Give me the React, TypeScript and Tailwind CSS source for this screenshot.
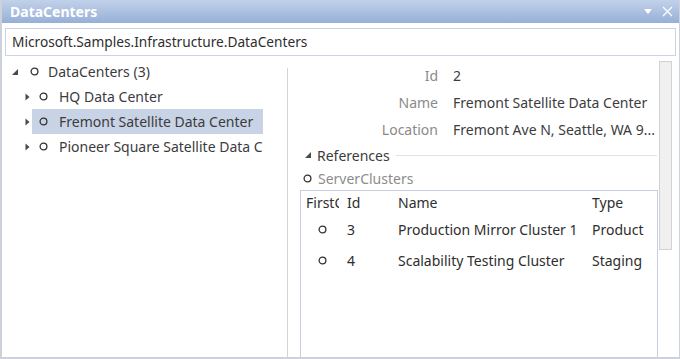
import React from "react";

const Circle = ({ color = "#333333" }: { color?: string }) => (
  <svg width="9" height="9" viewBox="0 0 9 9" className="shrink-0">
    <circle cx="4.5" cy="4.5" r="3.4" fill="none" stroke={color} strokeWidth="1.3" />
  </svg>
);

const Expanded = () => (
  <svg width="6" height="6" viewBox="0 0 6 6" className="shrink-0">
    <polygon points="6,0 6,6 0,6" fill="#4a4a4a" />
  </svg>
);

const Collapsed = () => (
  <svg width="5" height="8" viewBox="0 0 5 8" className="shrink-0">
    <polygon points="0.5,0.5 4.5,4 0.5,7.5" fill="#4a4a4a" />
  </svg>
);

export default function App() {
  const font = "font-['Noto_Sans',_'Open_Sans',_sans-serif]";
  return (
    <div
      className={`w-[680px] h-[359px] flex flex-col bg-white border-l-2 border-b-2 border-r border-[#cdd1d9] overflow-hidden ${font} text-[14px] text-[#3c3c3c]`}
    >
      {/* Title bar */}
      <div className="h-[23px] shrink-0 bg-gradient-to-b from-[#c1d1e9] to-[#98b0d7] flex items-center justify-between pl-[8px] pr-[6px]">
        <span className="text-white font-bold text-[14px] leading-none">DataCenters</span>
        <div className="flex items-center gap-[10px]">
          <svg width="8" height="5" viewBox="0 0 8 5">
            <polygon points="0,0 8,0 4,5" fill="#ffffff" />
          </svg>
          <svg width="11" height="11" viewBox="0 0 11 11">
            <path d="M1 1 L10 10 M10 1 L1 10" stroke="#ffffff" strokeWidth="1.3" />
          </svg>
        </div>
      </div>

      {/* Namespace textbox */}
      <div className="shrink-0 pl-[3px] pr-[3px] pt-[5px]">
        <div className="h-[28px] border border-[#c9d3e3] flex items-center pl-[6px] text-[13.7px] text-[#2e2e2e] whitespace-nowrap overflow-hidden">
          Microsoft.Samples.Infrastructure.DataCenters
        </div>
      </div>

      {/* Body */}
      <div className="flex flex-1 min-h-0">
        {/* Tree */}
        <div className="w-[285px] shrink-0 pt-[3px]">
          <div className="w-[261px] overflow-hidden">
            <div className="h-[25px] flex items-center pl-[10px] whitespace-nowrap">
              <Expanded />
              <span className="ml-[12px] flex"><Circle /></span>
              <span className="ml-[9px]">DataCenters (3)</span>
            </div>
            {[
              { name: "HQ Data Center", sel: false },
              { name: "Fremont Satellite Data Center", sel: true },
              { name: "Pioneer Square Satellite Data Center", sel: false },
            ].map((it) => (
              <div key={it.name} className="h-[25px] flex items-center pl-[23px] whitespace-nowrap">
                <Collapsed />
                <div
                  className={`ml-[2px] h-[25px] flex-1 flex items-center pl-[7px] ${
                    it.sel ? "bg-[#c8d3e6]" : ""
                  }`}
                >
                  <Circle />
                  <span className="ml-[11px]">{it.name}</span>
                </div>
              </div>
            ))}
          </div>
        </div>

        {/* Splitter */}
        <div className="w-[1px] shrink-0 mt-[12px] bg-[#d4d4d4]" />

        {/* Right panel */}
        <div className="flex-1 flex min-w-0">
          <div className="w-[370px] shrink-0 pt-[6px]">
            {[
              { l: "Id", v: "2" },
              { l: "Name", v: "Fremont Satellite Data Center" },
              { l: "Location", v: "Fremont Ave N, Seattle, WA 9..." },
            ].map((r) => (
              <div key={r.l} className="h-[27px] flex items-center whitespace-nowrap">
                <div className="w-[150px] text-right text-[#8a8a8a] shrink-0">{r.l}</div>
                <div className="ml-[15px] flex-1 overflow-hidden text-[#3c3c3c]">{r.v}</div>
              </div>
            ))}

            <div className="h-[24px] flex items-center pl-[17px]">
              <Expanded />
              <span className="ml-[6px] text-[#3c3c3c]">References</span>
              <div className="flex-1 ml-[6px] h-[1px] bg-[#e2e2e2] mr-[1px]" />
            </div>

            <div className="h-[23px] flex items-center pl-[15px]">
              <Circle />
              <span className="ml-[6px] text-[#8c8c8c]">ServerClusters</span>
            </div>

            <div className="ml-[12px] h-[200px] border border-[#c5cfdf] border-b-0">
              <div className="h-[23px] flex items-center whitespace-nowrap text-[#2e2e2e]">
                <div className="w-[42px] pl-[5px] shrink-0">
                  <div className="w-[33px] overflow-hidden">FirstCluster</div>
                </div>
                <div className="w-[51px] pl-[4px] shrink-0">Id</div>
                <div className="w-[194px] pl-[4px] shrink-0">Name</div>
                <div className="w-[56px] pl-[4px] overflow-hidden shrink-0">Type</div>
              </div>
              {[
                { id: "3", name: "Production Mirror Cluster 1", type: "Production" },
                { id: "4", name: "Scalability Testing Cluster", type: "Staging" },
              ].map((r) => (
                <div key={r.id} className="h-[31px] flex items-center whitespace-nowrap text-[#2e2e2e]">
                  <div className="w-[42px] pl-[17px] shrink-0 flex items-center">
                    <Circle />
                  </div>
                  <div className="w-[51px] pl-[4px] shrink-0">{r.id}</div>
                  <div className="w-[194px] pl-[4px] shrink-0 overflow-hidden">{r.name}</div>
                  <div className="w-[56px] pl-[4px] overflow-hidden shrink-0">{r.type}</div>
                </div>
              ))}
            </div>
          </div>

          {/* Scrollbar */}
          <div className="w-[20px] shrink-0 pt-[5px] pl-[1px]">
            <div className="w-[13px] h-[189px] bg-[#f0f0f0] border border-[#d2d2d2]" />
          </div>
        </div>
      </div>
    </div>
  );
}
